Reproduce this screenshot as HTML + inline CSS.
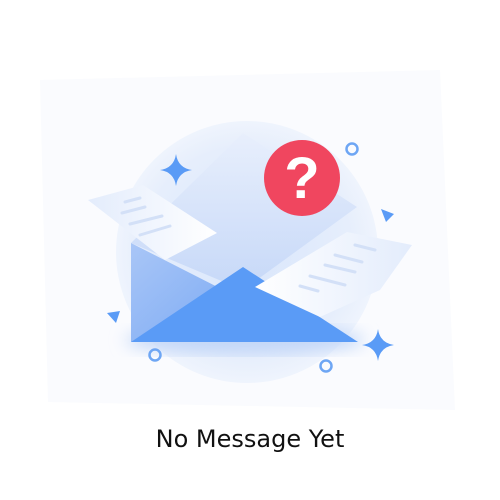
<!DOCTYPE html>
<html><head><style>
html,body{margin:0;padding:0;background:#fff;}
svg{display:block}
</style></head><body>
<svg width="500" height="500" viewBox="0 0 500 500">
<defs>
<radialGradient id="bg" cx="0.5" cy="0.5" r="0.5">
<stop offset="0" stop-color="#d9e6fb"/><stop offset="0.8" stop-color="#e6eefc"/><stop offset="1" stop-color="#eff4fd"/>
</radialGradient>
<linearGradient id="flap" x1="0" y1="0" x2="0" y2="1">
<stop offset="0" stop-color="#e8effc"/><stop offset="1" stop-color="#c6d8f8"/>
</linearGradient>
<linearGradient id="body" x1="0" y1="0" x2="1" y2="1">
<stop offset="0" stop-color="#a9c6f7"/><stop offset="1" stop-color="#7aa9f3"/>
</linearGradient>
<linearGradient id="paper" x1="0" y1="0" x2="1" y2="0">
<stop offset="0" stop-color="#e3ecfc"/><stop offset="1" stop-color="#ffffff"/>
</linearGradient>
<linearGradient id="paper2" x1="1" y1="0" x2="0" y2="0">
<stop offset="0" stop-color="#e3ecfc"/><stop offset="1" stop-color="#ffffff"/>
</linearGradient>
<filter id="blur"><feGaussianBlur stdDeviation="8"/></filter>
</defs>
<polygon points="40,80 440,70 455,410 48,402" fill="#fafbfe"/>
<circle cx="247" cy="252" r="131" fill="url(#bg)"/>
<ellipse cx="245" cy="340" rx="120" ry="14" fill="#c3d7f8" filter="url(#blur)"/>
<polygon points="243,133 357,207 243,290 131,243" fill="url(#flap)"/>
<polygon points="131,243 243,300 131,342" fill="url(#body)"/>
<polygon points="243,267 358,342 131,342" fill="#5a9bf6"/>
<polygon points="88,200 143,185 217,233 165,260" fill="url(#paper)"/>
<g stroke="#d3e0f7" stroke-width="3" stroke-linecap="round">
<line x1="125" y1="202" x2="140" y2="198"/><line x1="122" y1="213" x2="145" y2="207"/>
<line x1="130" y1="224" x2="162" y2="216"/><line x1="140" y1="235" x2="170" y2="226"/>
</g>
<polygon points="255,287 347,232 412,245 380,290 320,317" fill="url(#paper2)"/>
<g stroke="#d3e0f7" stroke-width="3" stroke-linecap="round">
<line x1="355" y1="245" x2="375" y2="250"/><line x1="335" y1="255" x2="362" y2="262"/>
<line x1="325" y1="265" x2="355" y2="272"/><line x1="310" y1="276" x2="345" y2="285"/>
<line x1="300" y1="286" x2="318" y2="291"/>
</g>
<circle cx="302" cy="178" r="38" fill="#f0465f"/>
<text x="302" y="198" font-family="Liberation Sans, sans-serif" font-weight="bold" font-size="58" fill="#fff" text-anchor="middle">?</text>
<path d="M176,154 Q178,168 192,170 Q178,172 176,186 Q174,172 160,170 Q174,168 176,154Z" fill="#5a9bf6"/>
<path d="M378,329 Q380,343 394,345 Q380,347 378,361 Q376,347 362,345 Q376,343 378,329Z" fill="#5a9bf6"/>
<g fill="none" stroke="#6ea6f4" stroke-width="2.5">
<circle cx="352" cy="149" r="5.5"/><circle cx="155" cy="355" r="5.5"/><circle cx="326" cy="366" r="5.5"/>
</g>
<polygon points="381,209 394,214 386,222" fill="#5a9bf6"/>
<polygon points="107,313 120,311 116,323" fill="#5a9bf6"/>
<text x="250" y="447" font-family="DejaVu Sans, sans-serif" font-size="24" fill="#111" text-anchor="middle">No Message Yet</text>
</svg>
</body></html>
